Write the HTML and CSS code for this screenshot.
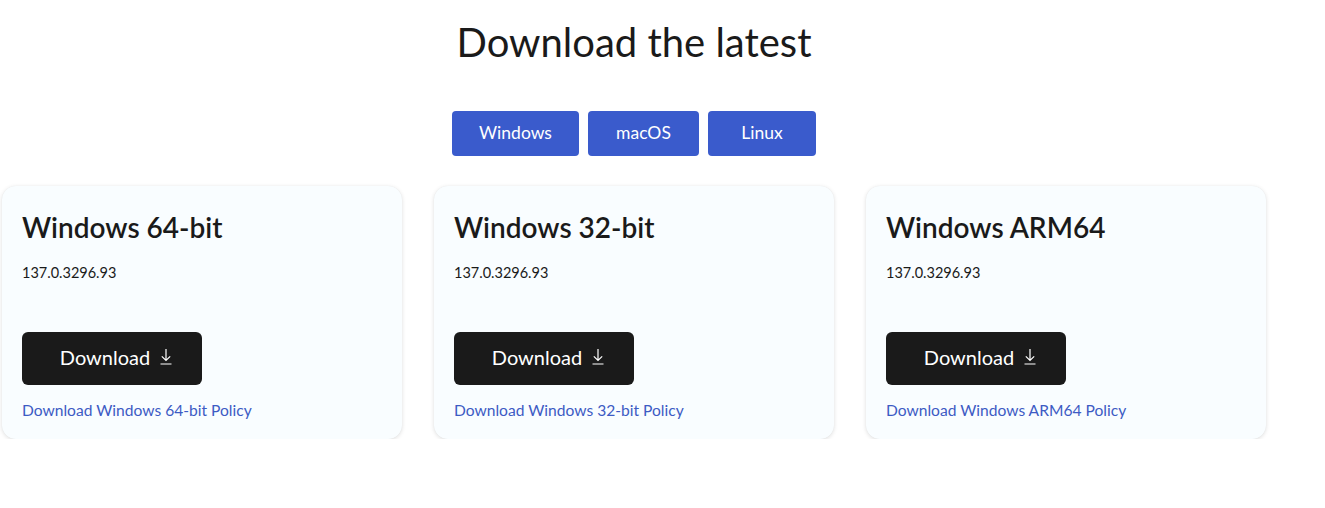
FILE: index.html
```html
<!DOCTYPE html>
<html lang="en">
<head>
<meta charset="utf-8">
<title>Download the latest</title>
<link rel="stylesheet" href="styles.css">
</head>
<body>
<main class="page">
  <h1 class="heading">Download the latest</h1>
  <nav class="tabs">
    <button class="tab tab-windows">Windows</button>
    <button class="tab tab-mac">macOS</button>
    <button class="tab tab-linux">Linux</button>
  </nav>
  <section class="cards">
    <article class="card">
      <h2 class="card-title">Windows 64-bit</h2>
      <p class="version">137.0.3296.93</p>
      <button class="dl-btn">Download <svg class="dl-icon" viewBox="0 0 12 17" width="12" height="17"><path d="M6 1V12.5M1.8 8.3L6 12.5L10.2 8.3M0.5 16H11.5" fill="none" stroke="#fff" stroke-width="1.2"/></svg></button>
      <a class="policy" href="#">Download Windows 64-bit Policy</a>
    </article>
    <article class="card">
      <h2 class="card-title">Windows 32-bit</h2>
      <p class="version">137.0.3296.93</p>
      <button class="dl-btn">Download <svg class="dl-icon" viewBox="0 0 12 17" width="12" height="17"><path d="M6 1V12.5M1.8 8.3L6 12.5L10.2 8.3M0.5 16H11.5" fill="none" stroke="#fff" stroke-width="1.2"/></svg></button>
      <a class="policy" href="#">Download Windows 32-bit Policy</a>
    </article>
    <article class="card">
      <h2 class="card-title">Windows ARM64</h2>
      <p class="version">137.0.3296.93</p>
      <button class="dl-btn">Download <svg class="dl-icon" viewBox="0 0 12 17" width="12" height="17"><path d="M6 1V12.5M1.8 8.3L6 12.5L10.2 8.3M0.5 16H11.5" fill="none" stroke="#fff" stroke-width="1.2"/></svg></button>
      <a class="policy" href="#">Download Windows ARM64 Policy</a>
    </article>
  </section>
</main>
</body>
</html>
```
FILE: styles.css
```css
* { box-sizing: border-box; }
html, body { margin: 0; padding: 0; background: #fff; }
body { font-family: Lato, "Open Sans", "Liberation Sans", sans-serif; color: #1a1a1a; }
.page { width: 1264px; margin-left: 2px; padding-top: 18px; }
.heading { margin: 0; text-align: center; font-size: 40px; font-weight: 400; line-height: 48px; color: #1a1a1a; }
.tabs { display: flex; justify-content: center; gap: 9px; margin-top: 45px; }
.tab { height: 45px; border: 0; border-radius: 4px; background: #3a5bcc; color: #fff; font-family: inherit; font-size: 17.5px; padding: 0 0 2px 0; }
.tab-windows { width: 127px; }
.tab-mac { width: 111px; }
.tab-linux { width: 108px; }
.cards { display: flex; gap: 32px; margin-top: 30px; }
.card { width: 400px; height: 253px; background: #f9fdff; border-radius: 14px; box-shadow: 0 1px 4px rgba(0,0,0,0.13), 0 0 1px rgba(0,0,0,0.06); padding: 24px 20px 0 20px; display: flex; flex-direction: column; align-items: flex-start; }
.card-title { margin: 0; font-size: 28px; font-weight: 600; line-height: 34px; }
.version { margin: 20px 0 0 0; font-size: 14.5px; line-height: 18px; }
.dl-btn { margin-top: 50px; width: 180px; height: 53px; background: #1a1a1a; color: #fff; border: 0; border-radius: 6px; font-family: inherit; font-size: 20px; display: flex; align-items: center; justify-content: center; gap: 10px; padding: 0 0 3px 8px; }
.dl-icon { display: block; margin-top: -1px; }
.policy { margin-top: 16px; font-size: 15.6px; line-height: 18px; color: #3d5bc4; text-decoration: none; }
```
